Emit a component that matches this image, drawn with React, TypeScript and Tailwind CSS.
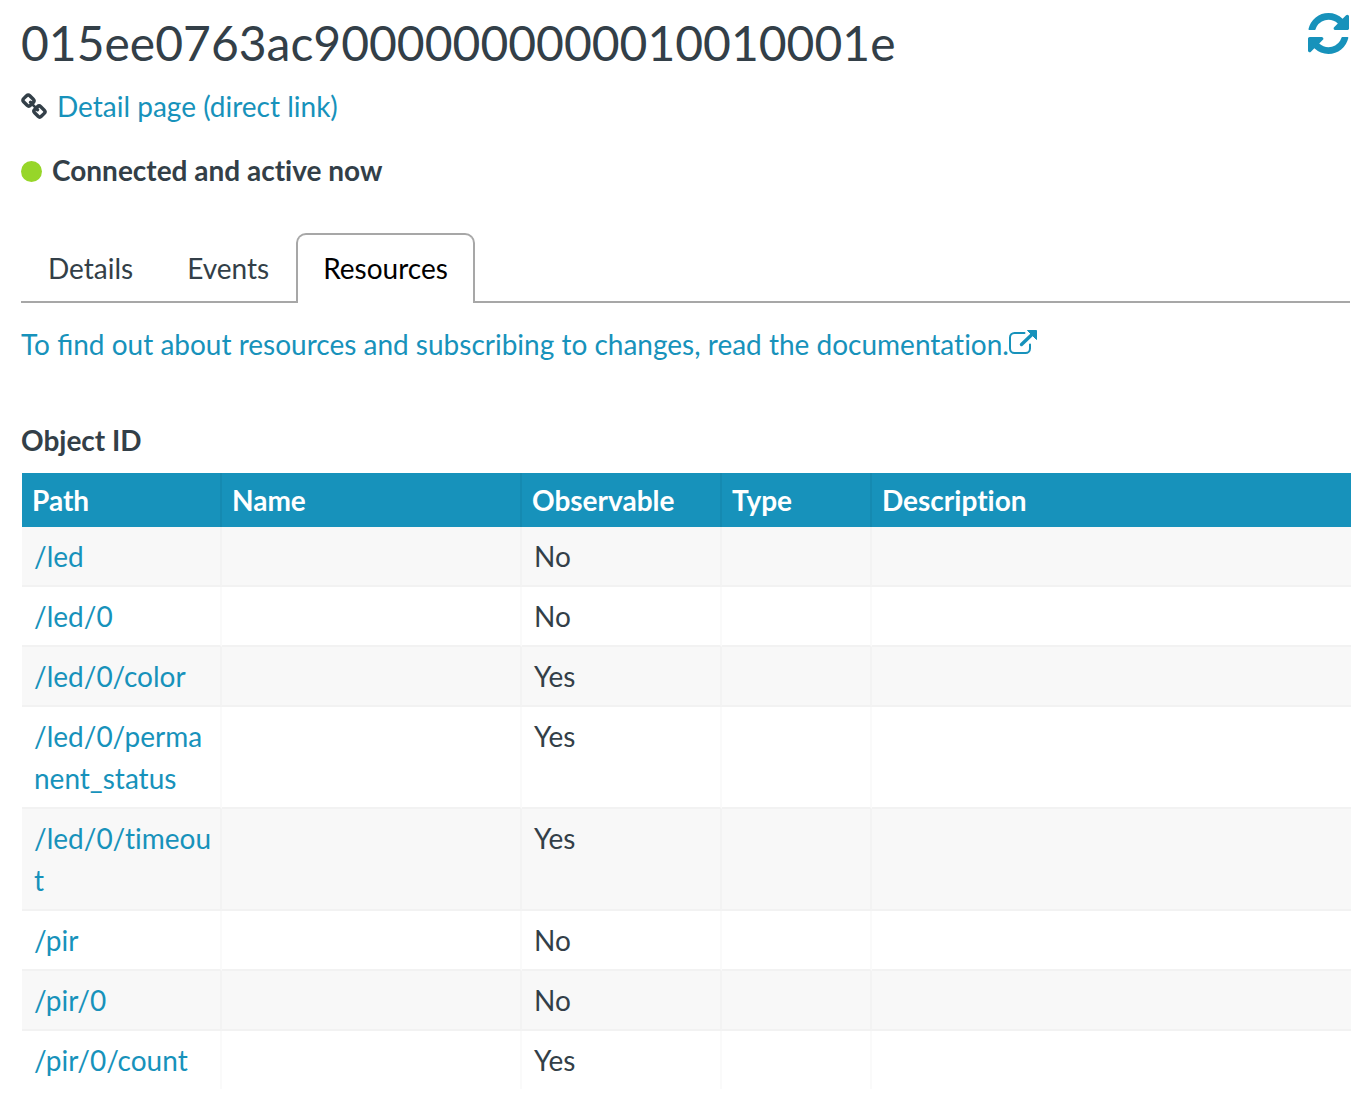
const rows: [string, string][] = [
  ["/led", "No"],
  ["/led/0", "No"],
  ["/led/0/color", "Yes"],
  ["/led/0/permanent_status", "Yes"],
  ["/led/0/timeout", "Yes"],
  ["/pir", "No"],
  ["/pir/0", "No"],
  ["/pir/0/count", "Yes"],
];

const tabs = ["Details", "Events", "Resources"];

const columns = [
  { label: "Path", width: "w-[200px]" },
  { label: "Name", width: "w-[300px]" },
  { label: "Observable", width: "w-[200px]" },
  { label: "Type", width: "w-[150px]" },
  { label: "Description", width: "" },
];

const cell = "border-r-2 border-r-black/2 pl-3 pr-2 py-2 align-top break-all last:border-r-0";

function RefreshIcon() {
  return (
    <svg viewBox="0 0 1536 1536" className="size-[41px]" fill="currentColor" aria-hidden="true">
      <path d="M1511 928q0 5-1 7-64 268-268 434.500T764 1536q-146 0-282.500-55T238 1324l-129 129q-19 19-45 19t-45-19-19-45V960q0-26 19-45t45-19h448q26 0 45 19t19 45-19 45l-137 137q71 66 161 102t187 36q134 0 250-65t186-179q11-17 53-117 8-23 30-23h192q13 0 22.500 9.500t9.500 22.500zm25-800v448q0 26-19 45t-45 19h-448q-26 0-45-19t-19-45 19-45l138-138Q969 256 768 256q-134 0-250 65T332 500q-11 17-53 117-8 23-30 23H50q-13 0-22.500-9.500T18 608v-7q65-268 270-434.500T768 0q146 0 284 55.500T1297 212l130-129q19-19 45-19t45 19 19 45z" />
    </svg>
  );
}

function ChainIcon() {
  return (
    <svg viewBox="0 0 26 26" className="size-[26px]" fill="none" stroke="currentColor" strokeWidth="3.400" strokeLinecap="round" strokeLinejoin="round" aria-hidden="true">
      <path d="M9.500 9.200l1.500 1.500M12.300 9.500c1-1 1-2.200 0-3.200L8.800 2.700c-1-1-2.200-1-3.200 0L2.600 5.600c-1 1-1 2.200 0 3.200l3.500 3.500c1 1 2.400 1 3.400 0" />
      <path d="M16.500 16.800l-1.500-1.500M13.600 16.500c-1 1-1 2.200 0 3.200l3.500 3.600c1 1 2.200 1 3.200 0l3-2.900c1-1 1-2.200 0-3.200l-3.500-3.500c-1-1-2.400-1-3.400 0" />
      <path d="M10.500 10.500l5 5" strokeWidth="2.500" />
    </svg>
  );
}

function ExternalIcon() {
  return (
    <svg viewBox="0 0 28 26" className="mb-1 h-[26px] w-7" fill="none" stroke="currentColor" aria-hidden="true">
      <path d="M15.500 4H5.500A4.500 4.500 0 0 0 1 8.500v11A4.500 4.500 0 0 0 5.500 24h11a4.500 4.500 0 0 0 4.500-4.500v-4" strokeWidth="2" strokeLinecap="round" />
      <path d="M12.500 15.500L23 5.500" strokeWidth="3.400" strokeLinecap="round" />
      <path d="M18.500 1.500H27.500v9z" fill="currentColor" strokeWidth="1" strokeLinejoin="round" />
    </svg>
  );
}

export default function App() {
  return (
    <main className="px-[21px] pr-4 pt-3 pb-5 font-[Lato,sans-serif] text-[28px] leading-[42px] text-[#333f48] [font-variant-ligatures:none]">
      <header className="flex items-start justify-between">
        <h1 className="text-5xl leading-[62px]">015ee0763ac90000000000010010001e</h1>
        <button type="button" aria-label="Refresh" className="mt-px mr-0.5 text-[#1792bb]">
          <RefreshIcon />
        </button>
      </header>

      <p className="mt-[11px] flex items-center gap-[10px]">
        <ChainIcon />
        <a href="#detail" className="text-[#1792bb]">Detail page (direct link)</a>
      </p>

      <p className="mt-[22px] flex items-center gap-[10px] font-bold">
        <span className="mt-0.5 size-[21px] rounded-full bg-[#97d629]" />
        Connected and active now
      </p>

      <div role="tablist" className="mt-[42px] mr-px flex border-b-2 border-[#a7a7a7]">
        {tabs.map((tab) => (
          <button
            key={tab}
            type="button"
            role="tab"
            aria-selected={tab === "Resources"}
            className="-mb-0.5 rounded-t-[10px] border-2 border-b-0 border-transparent px-[25px] pt-3 pb-[14px] aria-selected:border-[#a7a7a7] aria-selected:bg-white aria-selected:text-black"
          >
            {tab}
          </button>
        ))}
      </div>

      <p className="mt-5">
        <a href="#documentation" className="flex items-center text-[#1792bb]">
          <span>
            To <span className="[font-variant-ligatures:normal]">find</span> out about resources and subscribing to changes, read the documentation.
          </span>
          <ExternalIcon />
        </a>
      </p>

      <h2 className="mt-[54px] font-bold" id="object-id">Object ID</h2>

      <table aria-labelledby="object-id" className="mt-3 ml-px w-[calc(100%-1px)] table-fixed border-separate border-spacing-0">
        <thead>
          <tr className="bg-[#1792bb] text-white">
            {columns.map(({ label, width }) => (
              <th key={label} className={`${width} border-r-2 border-black/5 px-[10px] py-1.5 text-left font-bold last:border-r-0`}>
                {label}
              </th>
            ))}
          </tr>
        </thead>
        <tbody>
          {rows.map(([path, observable]) => (
            <tr key={path} className="odd:bg-[#f8f8f8] [&:not(:last-child)>td]:border-b-2 [&>td]:border-b-[#f2f2f2]">
              <td className={cell}>
                <a href={`#${path}`} className="text-[#1792bb]">{path}</a>
              </td>
              <td className={cell} />
              <td className={cell}>{observable}</td>
              <td className={cell} />
              <td className={cell} />
            </tr>
          ))}
        </tbody>
      </table>
    </main>
  );
}
